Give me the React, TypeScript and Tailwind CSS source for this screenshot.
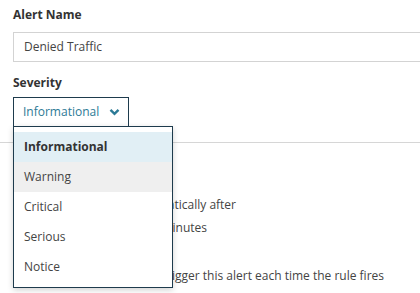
const options = ["Informational", "Warning", "Critical", "Serious", "Notice"];

export default function App() {
  return (
    <div
      className="relative w-[420px] h-[293px] overflow-hidden bg-white text-[12px] text-[#333]"
      style={{ fontFamily: '"Open Sans", sans-serif' }}
    >
      <div className="pl-[13px] pt-[6px]">
        <div className="font-bold leading-[18px] text-[#333]">Alert Name</div>
        <div className="mt-[8px] h-[30px] w-[420px] border border-[#d3d3d3] flex items-center pl-[10px] text-[#444]">
          Denied Traffic
        </div>
        <div className="mt-[12px] font-bold leading-[18px]">Severity</div>
        <div className="mt-[5px] h-[30px] w-[116px] border border-[#1e3b4d] flex items-center pl-[9px] gap-[10px] text-[#2c7a96]">
          <span>Informational</span>
          <svg width="11" height="8" viewBox="0 0 11 8" fill="none">
            <path d="M1.5 1.8 L5.5 5.8 L9.5 1.8" stroke="#2c7a96" strokeWidth="2.4" />
          </svg>
        </div>
      </div>

      <div className="mt-[15px] border-t border-[#d6d6d6]" />

      <div className="pl-[13px] pt-[52px] text-[#444] whitespace-nowrap">
        <div className="flex items-center leading-[20px]">
          <span className="w-[13px] h-[13px] border border-[#999]" />
          <span className="w-[210px] text-right">Resolve automatically after</span>
        </div>
        <div className="mt-[2px] w-[194px] text-right leading-[22px]">30 minutes</div>
        <div className="mt-[27px] flex items-center leading-[20px]">
          <span className="w-[13px] h-[13px] border border-[#999]" />
          <span className="w-[358px] text-right">Check to re-trigger this alert each time the rule fires</span>
        </div>
      </div>

      <div className="absolute left-[13px] top-[126px] w-[160px] h-[162px] border border-[#1e3b4d] bg-white pt-[5px] shadow-[0_2px_6px_rgba(0,0,0,0.18)]">
        {options.map((o, i) => (
          <div
            key={o}
            className={
              "h-[30px] flex items-center pl-[10px] " +
              (i === 0
                ? "bg-[#e1eff5] font-bold text-[#333]"
                : i === 1
                ? "bg-[#efefef] text-[#444]"
                : "text-[#444]")
            }
          >
            {o}
          </div>
        ))}
      </div>
    </div>
  );
}
